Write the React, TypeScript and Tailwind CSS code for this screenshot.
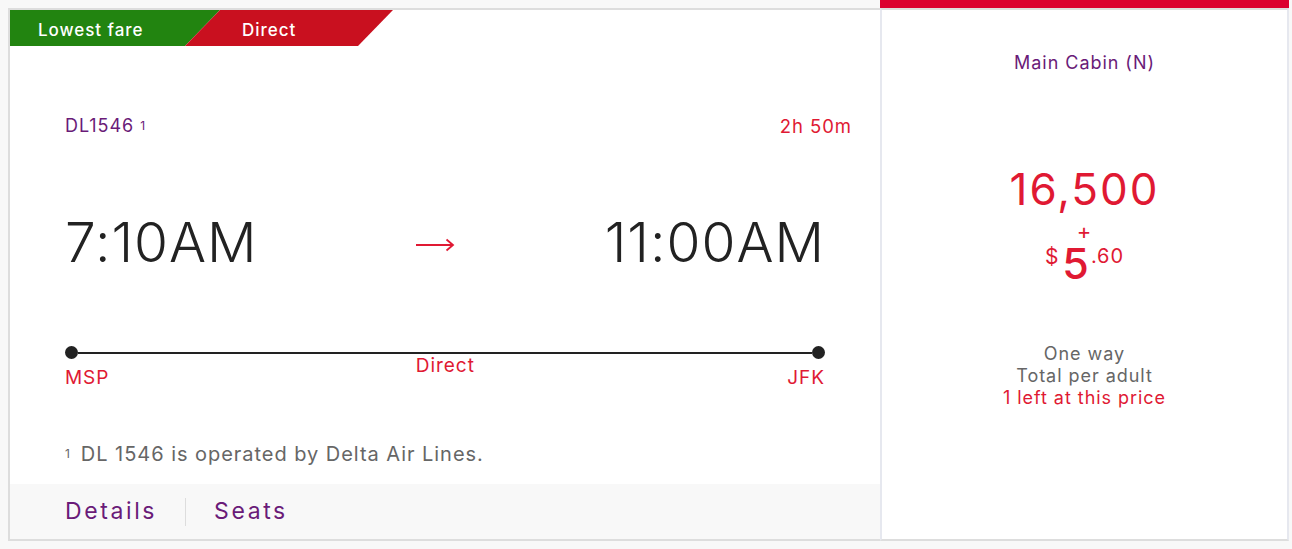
import React from "react";

const font = { fontFamily: "Inter, 'Open Sans', sans-serif" };

function Tags() {
  return (
    <div className="flex h-[36px] shrink-0">
      <div className="flex h-full w-[210px] items-center bg-[#228410] pl-[28px] pt-[6px] text-[17px] font-medium text-white [clip-path:polygon(0_0,100%_0,calc(100%-35px)_100%,0_100%)]">
        Lowest fare
      </div>
      <div className="-ml-[35px] flex h-full w-[208px] items-center bg-[#c9101f] pl-[57px] pt-[6px] text-[17px] font-medium text-white [clip-path:polygon(35px_0,100%_0,calc(100%-35px)_100%,0_100%)]">
        Direct
      </div>
    </div>
  );
}

function Timeline() {
  return (
    <div className="relative mt-[76px]">
      <div className="flex items-center">
        <div className="h-[13px] w-[13px] shrink-0 rounded-full bg-[#222222]" />
        <div className="h-[2px] flex-1 bg-[#222222]" />
        <div className="h-[13px] w-[13px] shrink-0 rounded-full bg-[#222222]" />
      </div>
      <div className="flex items-start justify-between text-[19px] leading-[22px] text-[#e01933]">
        <span className="mt-[8px]">MSP</span>
        <span className="-mt-[4px] mr-[6px]">Direct</span>
        <span className="mt-[8px]">JFK</span>
      </div>
    </div>
  );
}

function FlightCard() {
  return (
    <div className="mt-[8px] flex h-[533px] w-[872px] shrink-0 flex-col border-b-2 border-l-2 border-t-2 border-[#dddddd] bg-white">
      <Tags />
      <div className="flex flex-1 flex-col px-[55px]">
        <div className="mt-[70px] flex items-start justify-between leading-[20px]">
          <span className="text-[18px] text-[#6a1b78]">
            DL1546 <sup className="relative -top-[2px] text-[12px]">1</sup>
          </span>
          <span className="-mr-[27px] text-[18.5px] text-[#e01933]">2h 50m</span>
        </div>
        <div className="mt-[78px] flex items-center justify-between">
          <span className="text-[55px] font-light leading-[56px] tracking-[1px] text-[#222222]">7:10AM</span>
          <svg width="40" height="16" viewBox="0 0 40 16" className="ml-[8px] mt-[6px]" fill="none">
            <path d="M1 8H38" stroke="#e01933" strokeWidth="1.8" />
            <path d="M31.5 2.5L38 8L31.5 13.5" stroke="#e01933" strokeWidth="1.8" />
          </svg>
          <span className="text-[55px] font-light leading-[56px] tracking-[1px] text-[#222222]">11:00AM</span>
        </div>
        <Timeline />
        <div className="mt-[53px] text-[20px] leading-[24px] text-[#666666]">
          <sup className="relative -top-[3px] mr-[10px] text-[12px]">1</sup>DL 1546 is operated by Delta Air Lines.
        </div>
      </div>
      <div className="flex h-[55px] shrink-0 items-center bg-[#f8f8f8] pl-[55px] text-[23px] tracking-[2.6px] text-[#6a1b78]">
        <span>Details</span>
        <span className="mx-[28px] h-[28px] w-[1px] bg-[#dddddd]" />
        <span>Seats</span>
      </div>
    </div>
  );
}

function FarePanel() {
  return (
    <div className="flex h-[541px] w-[409px] shrink-0 flex-col">
      <div className="h-[8px] shrink-0 bg-[#dc002f]" />
      <div className="flex flex-1 flex-col items-center border-b-2 border-l-2 border-r-2 border-t-2 border-b-[#dddddd] border-l-[#e6e8ef] border-r-[#e6e8ef] border-t-[#dddddd] bg-white">
        <div className="mt-[42px] text-[18px] leading-[22px] text-[#6a1b78]">Main Cabin (N)</div>
        <div className="mt-[92px] text-[44px] leading-[46px] tracking-[2px] text-[#e01933]">16,500</div>
        <div className="mt-[12px] text-[22px] leading-[14px] text-[#e01933]">+</div>
        <div className="mt-[8px] flex items-start text-[#e01933]">
          <span className="mr-[3px] mt-[1px] text-[21px] leading-[20px]">$</span>
          <span className="-mt-[3px] text-[43px] font-medium leading-[40px]">5</span>
          <span className="ml-[1px] text-[20px] leading-[20px]">.60</span>
        </div>
        <div className="mt-[60px] flex flex-col items-center text-[18px] leading-[22px] text-[#666666]">
          <span>One way</span>
          <span>Total per adult</span>
          <span className="text-[#e01933]">1 left at this price</span>
        </div>
      </div>
    </div>
  );
}

export default function App() {
  return (
    <div className="flex h-[549px] w-[1292px] overflow-hidden bg-[#f8f8f8] pl-[8px] tracking-[0.06em]" style={font}>
      <FlightCard />
      <FarePanel />
    </div>
  );
}
